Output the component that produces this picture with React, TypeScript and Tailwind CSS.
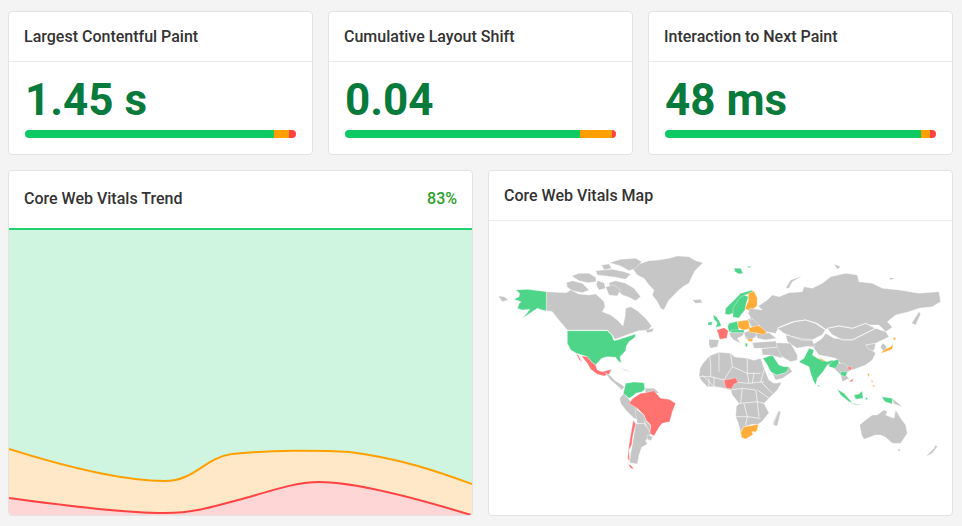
import React from "react";

const G = "#c6c6c6", P = "#4fd58a", R = "#ff7270", O = "#ffad3a";
type Shape = [string, string];
type Group = { x: number; y: number; shapes: Shape[]; lines?: string[] };

const groups: Group[] = [
  { x: 490, y: 240, shapes: [
    [G, "432,88 450,72 480,62 510,60 540,55 565,48 600,50 620,62 642,68 630,80 618,92 608,112 600,130 585,138 570,150 555,165 540,180 532,195 525,210 515,205 505,185 490,165 495,150 480,135 465,115 445,105"],
    [G, "172,155 232,158 245,150 270,162 300,165 320,162 335,175 345,185 348,200 340,215 365,225 385,240 402,258 408,230 410,205 425,200 445,212 470,235 488,258 478,270 450,272 420,282 395,292 378,298 370,285 355,270 235,270 205,235 190,215 172,212"],
    [G, "232,128 250,122 280,130 300,150 280,158 250,152 235,142"],
    [G, "248,108 270,100 300,100 320,112 322,125 295,128 270,122"],
    [G, "325,122 345,128 350,145 330,150 322,135"],
    [G, "360,128 380,122 410,130 435,145 455,170 440,182 420,172 400,165 385,150 362,142"],
    [G, "362,68 395,58 440,55 458,65 440,85 420,92 395,78"],
    [G, "338,75 360,72 368,85 345,90"],
    [G, "320,92 370,88 405,95 425,102 410,118 380,112 350,108 325,105"],
    [G, "350,140 375,135 395,150 385,168 360,165"],
    [G, "470,270 495,265 490,275 475,278"],
    [P, "80,150 115,148 172,155 172,212 160,210 145,205 125,218 100,235 115,218 122,208 100,210 85,205 90,192 96,185 75,178 90,170 92,160"],
    [G, "28,168 45,170 58,180 40,185"],
    [P, "235,272 355,272 368,285 375,302 392,298 415,290 440,282 438,292 420,305 412,318 410,332 393,350 397,368 390,365 380,352 355,350 338,355 320,375 305,362 295,350 262,340 245,330 235,310"],
    [R, "278,348 295,350 306,364 320,376 325,390 340,395 368,388 360,403 345,408 325,403 305,388 295,370 285,358"],
    [R, "262,342 268,345 280,368 270,358"],
    [G, "390,382 420,393 435,397 410,392"],
    [G, "610,180 635,178 640,188 620,190"],
  ]},
  { x: 580, y: 370, shapes: [
    [G, "78,8 92,15 108,32 130,45 136,52 128,60 112,44 95,30"],
    [G, "122,85 135,70 150,88 175,115 180,150 165,145 140,120 125,100"],
    [P, "133,70 140,40 165,36 195,38 198,58 188,66 170,70 162,78 150,85"],
    [G, "198,55 225,55 240,68 225,72 200,70"],
    [R, "150,100 162,85 185,70 200,68 225,62 245,85 270,88 290,100 280,125 272,155 250,160 240,172 225,198 212,190 215,165 200,150 195,135 175,115"],
    [G, "168,115 195,135 200,150 212,162 195,160 175,160"],
    [G, "195,152 215,165 212,186 205,175"],
    [G, "170,162 195,160 208,178 215,192 200,212 205,222 188,232 180,255 175,282 152,278 155,250 160,225 165,195"],
    [G, "205,195 222,200 215,212 205,208"],
    [R, "163,150 170,162 162,195 158,225 150,240 152,275 146,265 150,225 155,195"],
    [R, "148,283 155,285 165,297 155,295"],
  ]},
  { x: 690, y: 345, shapes: [
    [G, "30,95 33,70 42,55 62,32 90,22 125,25 137,36 175,40 195,46 215,40 225,70 240,105 255,115 278,112 265,135 240,160 225,175 235,195 240,203 220,228 208,238 190,238 165,245 155,262 148,235 140,215 142,185 150,175 130,150 125,135 100,128 80,125 55,125 40,110"],
    [R, "105,105 125,102 140,98 147,112 135,118 128,132 110,128"],
    [O, "155,262 165,245 185,242 195,240 208,238 205,255 190,270 170,282 158,278"],
    ["#ffffff", "190,260 196,260 196,266 190,266"],
    [G, "268,198 275,200 262,240 252,235"],
    [G, "250,85 262,90 285,85 300,65 310,80 280,100 260,105"],
    [P, "222,40 250,30 270,60 285,65 300,65 295,78 285,85 262,90 245,80 235,60"],
  ], lines: [
    "62,32 65,60 65,95 30,95", "65,95 105,105", "125,25 130,65 105,105", "130,65 175,85 175,40", "175,85 215,85", "175,85 180,115 147,112",
    "180,115 225,110", "225,75 215,110 250,145", "160,130 200,135 205,170 225,175", "160,130 155,175 140,180", "155,175 205,170", "140,215 175,215 215,220", "175,215 170,240", "90,25 90,80", "40,90 75,125", "195,85 190,115", "125,135 160,130", "205,135 240,160", "75,95 75,125", "60,100 60,125", "165,175 175,215", "205,170 210,215",
  ]},
  { x: 690, y: 280, shapes: [
    [G, "60,178 90,180 85,200 65,205 60,195"],
    [G, "120,158 165,158 160,168 145,175 155,190 135,180 125,170"],
    [G, "165,158 182,152 205,160 200,172 180,180 170,175"],
    [G, "176,118 205,108 225,130 190,145"],
    [G, "182,105 202,96 212,112 185,120"],
    [G, "200,160 240,158 262,175 230,180 205,175"],
    [P, "72,105 82,110 92,125 97,138 80,142 85,128 75,118"],
    [P, "57,127 70,125 68,136 57,135"],
    [R, "83,150 105,143 118,152 113,175 92,178 88,162"],
    [P, "108,102 110,85 138,58 155,40 190,30 192,38 170,44 155,55 140,80 133,100 118,104"],
    [P, "132,112 132,85 148,58 165,45 178,50 172,70 168,90 158,102 150,114"],
    [O, "178,40 195,33 205,55 204,78 184,94 168,86 178,62"],
    [P, "120,130 145,124 150,150 120,156 116,140"],
    [O, "147,124 178,120 184,147 160,150 147,142"],
    [O, "178,145 205,136 240,150 224,164 200,158 182,157"],
    [P, "125,150 165,150 165,158 125,158"],
    [O, "175,178 192,175 190,185 178,183"],
    [P, "168,190 175,190 175,200 170,200"],
  ]},
  { x: 720, y: 240, shapes: [
    [G, "130,210 118,198 145,180 160,165 180,170 210,158 250,155 255,140 280,145 310,130 335,110 380,100 415,105 420,125 460,130 490,145 540,150 600,160 660,155 665,185 640,200 600,205 570,215 530,225 505,245 520,262 500,275 480,255 440,255 400,265 360,258 320,268 295,250 260,240 220,245 180,262 170,280 140,275 125,260 100,235 88,222 92,205"],
    [G, "200,145 215,120 250,108 220,125 210,145"],
    [G, "578,250 600,215 605,222 590,255"],
    [G, "345,72 365,80 355,88"],
    [G, "510,113 530,115 515,120"],
    [G, "175,265 225,245 260,240 290,250 320,270 310,285 280,300 250,300 220,290 195,280"],
    [G, "325,265 360,258 400,265 440,250 470,265 440,280 400,300 370,300 340,285"],
    [G, "320,280 345,295 400,300 440,280 470,265 500,275 510,290 470,310 440,315 470,340 460,360 440,375 400,390 370,375 350,355 300,345 285,325 280,315 310,295"],
    [G, "200,285 220,290 280,300 288,320 265,320 235,325 215,312 205,305"],
    [G, "170,308 215,310 235,345 235,360 215,365 180,345"],
    [G, "100,308 170,303 175,322 130,325 105,325"],
    [G, "128,326 175,322 190,355 155,345 130,345"],
    [P, "45,85 65,85 72,100 60,102 48,95"],
    [P, "85,80 98,78 90,84"],
    [G, "490,310 500,315 505,330 495,335 485,322"],
  ]},
  { x: 800, y: 330, shapes: [
    [G, "202,45 230,40 225,62 208,58"],
    [G, "85,100 110,100 135,100 155,120 138,132 150,145 130,155 125,135 110,120"],
    [P, "30,55 45,60 40,75 55,85 85,95 100,90 108,98 85,105 72,125 55,145 50,165 42,150 35,130 30,110 8,100 0,95 15,85 25,65"],
    [O, "58,82 80,92 70,93"],
    [P, "88,108 102,92 118,88 120,98 110,115 96,112"],
    [P, "125,125 145,125 140,140 125,135"],
    [R, "143,112 158,110 155,122"],
    [R, "150,155 163,145 160,155"],
    [O, "245,70 255,60 275,50 282,40 280,58 258,66"],
    [O, "283,22 292,25 285,32"],
    [O, "205,130 212,132 208,142"],
    [O, "215,150 222,152 220,158"],
    [O, "220,165 228,166 225,172"],
    [P, "115,178 135,190 160,218 150,215 125,195"],
    [P, "165,195 180,192 190,183 192,205 170,208"],
    [P, "150,218 190,225 170,224"],
    [P, "200,200 208,207 200,210"],
    [P, "56,165 62,165 60,172"],
    [G, "280,205 310,230 285,222"],
    [P, "248,200 280,205 280,222 258,215"],
  ]},
  { x: 770, y: 360, shapes: [
    [G, "272,195 290,180 310,165 325,165 345,150 355,155 350,165 375,175 380,150 395,175 410,195 415,220 395,250 370,250 350,232 335,225 320,225 285,238 278,225"],
    [G, "385,268 395,268 390,275"],
    [G, "470,290 495,265 500,255 505,260 490,280"],
    [G, "13,195 30,155 35,155 25,198"],
  ]},
];

function WorldMap() {
  return (
    <svg viewBox="490 221 462 294" className="block h-[294px] w-[462px]">
      {groups.map((g, i) => (
        <g key={i} transform={`translate(${g.x} ${g.y}) scale(0.3333)`}>
          {g.shapes.map(([c, p], j) => (
            <polygon key={j} points={p} fill={c} stroke="#ffffff" strokeWidth={1} strokeLinejoin="round" />
          ))}
          {g.lines?.map((p, j) => (
            <polyline key={j} points={p} fill="none" stroke="#ffffff" strokeWidth={2} />
          ))}
        </g>
      ))}
      <g transform="translate(720 240) scale(0.3333)" fill="none" stroke="#ffffff" strokeWidth={2}>
        <polyline points="175,265 225,245 260,240 290,250 320,270 310,285 280,300 250,300 220,290" />
        <polyline points="325,265 360,258 400,265 440,250 470,265 440,280 400,300 370,300 340,285" />
        <polyline points="235,325 265,320 285,325" />
      </g>
    </svg>
  );
}

function Trend() {
  const top = "M9 449 C60 465 120 481 165 481 C195 481 205 458 232 454 C270 450 320 450 350 452 C400 458 440 472 473 484";
  const bottom = "M9 498 C60 505 130 513 165 513 C200 513 225 503 250 497 C280 488 300 482 320 482 C350 482 400 493 472 515";
  return (
    <svg viewBox="9 228 464 287" preserveAspectRatio="none" className="block h-[287px] w-full">
      <rect x="9" y="228" width="464" height="287" fill="#cff5e0" />
      <path d={`${top} L473 515 L9 515 Z`} fill="#ffe8c8" />
      <path d={`${bottom} L473 515 L9 515 Z`} fill="#ffd6d6" />
      <path d={top} fill="none" stroke="#ff9f00" strokeWidth={2} />
      <path d={bottom} fill="none" stroke="#ff4343" strokeWidth={2} />
      <line x1="9" y1="229" x2="473" y2="229" stroke="#1fd274" strokeWidth={2} />
    </svg>
  );
}

function Metric({ title, value, bar }: { title: string; value: string; bar: React.ReactNode }) {
  return (
    <div className="flex-1 overflow-hidden rounded border border-[#e3e3e3] bg-white">
      <div className="flex h-[50px] items-center border-b border-[#ebebeb] pl-[15px] text-[16px] font-medium text-[#333333]">
        {title}
      </div>
      <div className="px-4 pt-[12px]">
        <div className="h-[56px] text-[44px] leading-[52px] font-bold text-[#077a3c]">{value}</div>
        <div className="flex h-2 overflow-hidden rounded-full">{bar}</div>
      </div>
    </div>
  );
}

export default function App() {
  return (
    <div className="h-[526px] w-[962px] overflow-hidden bg-[#f4f4f4] pt-[11px] pr-[9px] pl-2 font-['Roboto',sans-serif]">
      <div className="flex h-[144px] gap-[15px]">
        <Metric title="Largest Contentful Paint" value="1.45 s" bar={<>
          <div className="w-[249px] bg-[#0dca62]" /><div className="w-[15px] bg-[#ff9f00]" /><div className="w-[7px] bg-[#ff4343]" />
        </>} />
        <Metric title="Cumulative Layout Shift" value="0.04" bar={<>
          <div className="w-[235px] bg-[#0dca62]" /><div className="w-[32px] bg-[#ff9f00]" /><div className="w-[4px] bg-[#ff4343]" />
        </>} />
        <Metric title="Interaction to Next Paint" value="48 ms" bar={<>
          <div className="w-[256px] bg-[#0dca62]" /><div className="w-[9px] bg-[#ff9f00]" /><div className="w-[6px] bg-[#ff4343]" />
        </>} />
      </div>
      <div className="mt-[15px] flex h-[346px] gap-[15px]">
        <div className="flex-1 overflow-hidden rounded border border-[#e3e3e3] bg-white">
          <div className="flex h-[57px] items-center justify-between px-[15px] pb-[2px] text-[16px] font-medium text-[#333333]">
            <span>Core Web Vitals Trend</span>
            <span className="text-[#2ca02c]">83%</span>
          </div>
          <Trend />
        </div>
        <div className="flex-1 overflow-hidden rounded border border-[#e3e3e3] bg-white">
          <div className="flex h-[50px] items-center border-b border-[#ebebeb] pl-[15px] text-[16px] font-medium text-[#333333]">
            Core Web Vitals Map
          </div>
          <WorldMap />
        </div>
      </div>
    </div>
  );
}
